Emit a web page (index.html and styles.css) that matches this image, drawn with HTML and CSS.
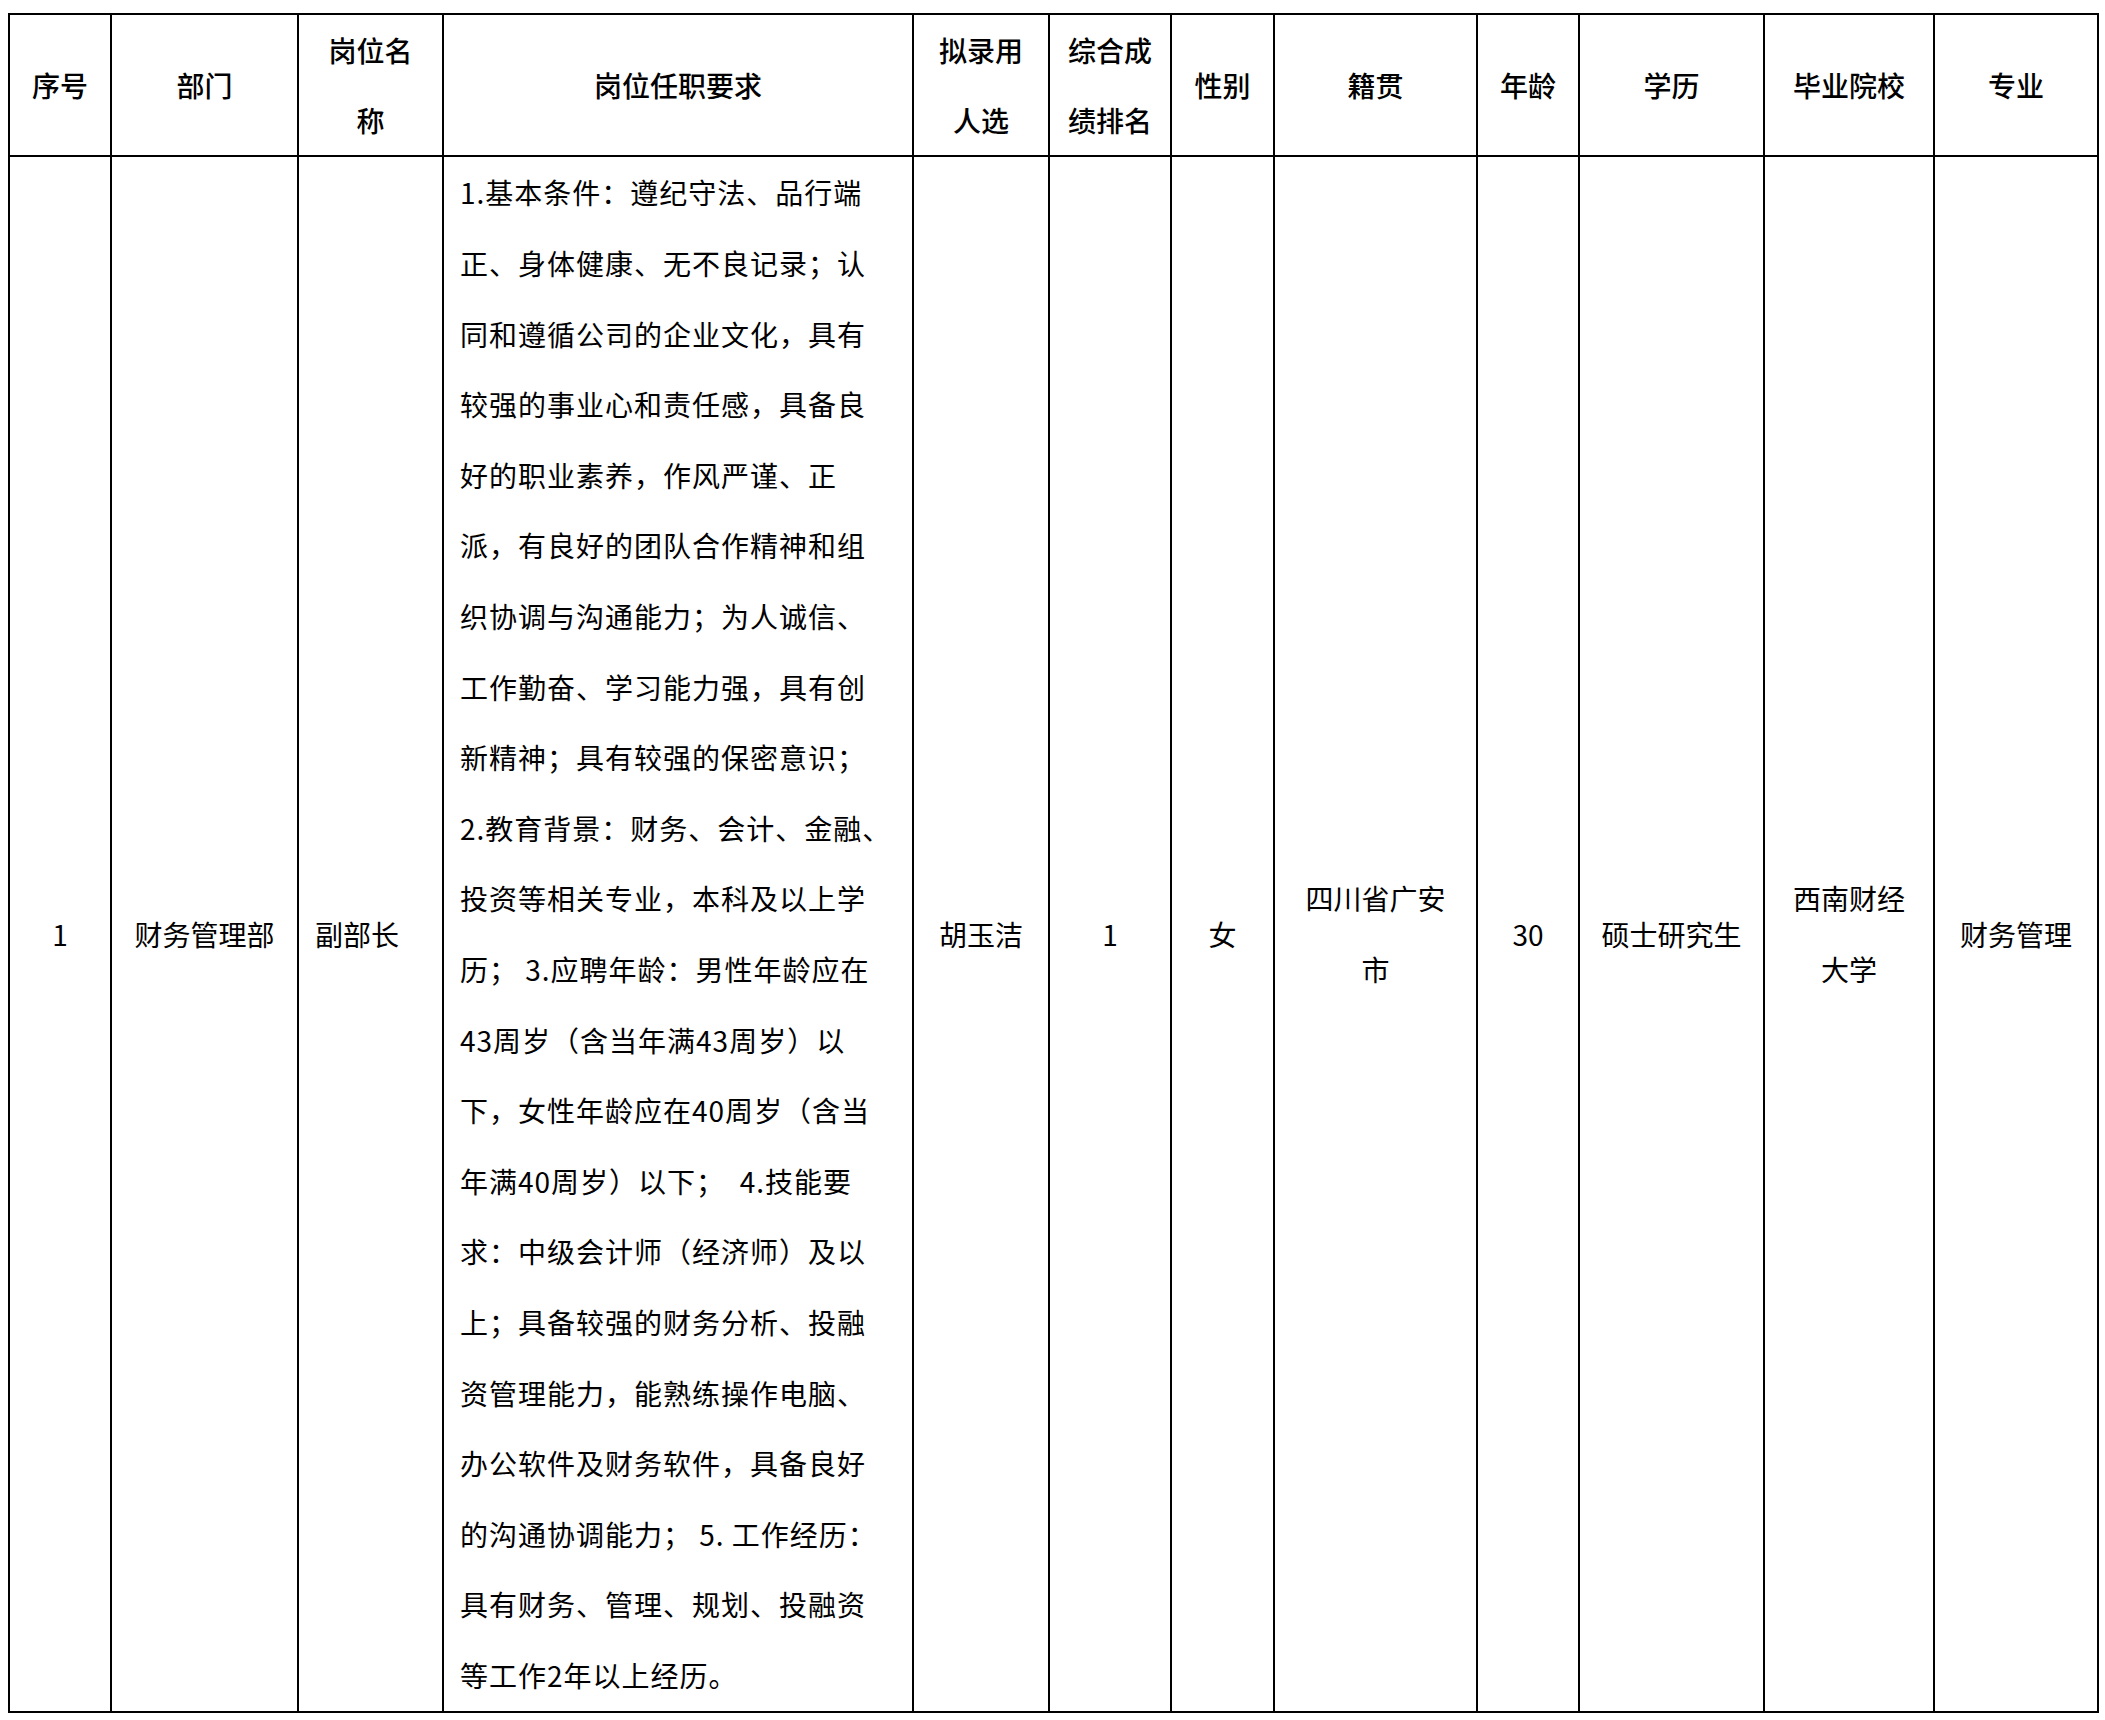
FILE: index.html
```html
<!DOCTYPE html>
<html lang="zh-CN">
<head>
<meta charset="utf-8">
<title>拟录用人选公示</title>
<link rel="stylesheet" href="styles.css">
</head>
<body>
<div class="sheet">
  <div class="cell head">序号</div>
  <div class="cell head">部门</div>
  <div class="cell head"><span>岗位名</span><span>称</span></div>
  <div class="cell head">岗位任职要求</div>
  <div class="cell head"><span>拟录用</span><span>人选</span></div>
  <div class="cell head"><span>综合成</span><span>绩排名</span></div>
  <div class="cell head">性别</div>
  <div class="cell head">籍贯</div>
  <div class="cell head">年龄</div>
  <div class="cell head">学历</div>
  <div class="cell head">毕业院校</div>
  <div class="cell head">专业</div>

  <div class="cell data">1</div>
  <div class="cell data">财务管理部</div>
  <div class="cell data left">副部长</div>
  <div class="cell data req">
    <span>1.基本条件：遵纪守法、品行端</span>
    <span>正、身体健康、无不良记录；认</span>
    <span>同和遵循公司的企业文化，具有</span>
    <span>较强的事业心和责任感，具备良</span>
    <span>好的职业素养，作风严谨、正</span>
    <span>派，有良好的团队合作精神和组</span>
    <span>织协调与沟通能力；为人诚信、</span>
    <span>工作勤奋、学习能力强，具有创</span>
    <span>新精神；具有较强的保密意识；</span>
    <span>2.教育背景：财务、会计、金融、</span>
    <span>投资等相关专业，本科及以上学</span>
    <span>历；&nbsp;3.应聘年龄：男性年龄应在</span>
    <span>43周岁（含当年满43周岁）以</span>
    <span>下，女性年龄应在40周岁（含当</span>
    <span>年满40周岁）以下；&nbsp;&nbsp;4.技能要</span>
    <span>求：中级会计师（经济师）及以</span>
    <span>上；具备较强的财务分析、投融</span>
    <span>资管理能力，能熟练操作电脑、</span>
    <span>办公软件及财务软件，具备良好</span>
    <span>的沟通协调能力；&nbsp;5. 工作经历：</span>
    <span>具有财务、管理、规划、投融资</span>
    <span>等工作2年以上经历。</span>
  </div>
  <div class="cell data">胡玉洁</div>
  <div class="cell data">1</div>
  <div class="cell data">女</div>
  <div class="cell data"><span>四川省广安</span><span>市</span></div>
  <div class="cell data">30</div>
  <div class="cell data">硕士研究生</div>
  <div class="cell data"><span>西南财经</span><span>大学</span></div>
  <div class="cell data">财务管理</div>
</div>
</body>
</html>
```
FILE: styles.css
```css
html, body {
  margin: 0;
  padding: 0;
  background: #fff;
}

body {
  font-family: "Noto Sans CJK SC", "Noto Sans", sans-serif;
  font-size: 28px;
  color: #000;
}

.sheet {
  display: grid;
  grid-template-columns: 100px 185px 143px 468px 134px 120px 101px 201px 100px 183px 168px 162px;
  grid-template-rows: 140px 1554px;
  gap: 2px;
  padding: 2px;
  background: #000;
  width: max-content;
  margin: 13px 0 0 8px;
}

.cell {
  background: #fff;
  display: flex;
  flex-direction: column;
  justify-content: center;
  align-items: center;
  text-align: center;
  white-space: nowrap;
}

.head {
  font-weight: 500;
  line-height: 70px;
}

.data {
  line-height: 70.6px;
}

.left {
  align-items: flex-start;
  padding-left: 16px;
}

.req {
  align-items: flex-start;
  text-align: left;
  padding-left: 16px;
  letter-spacing: 1px;
}
```
